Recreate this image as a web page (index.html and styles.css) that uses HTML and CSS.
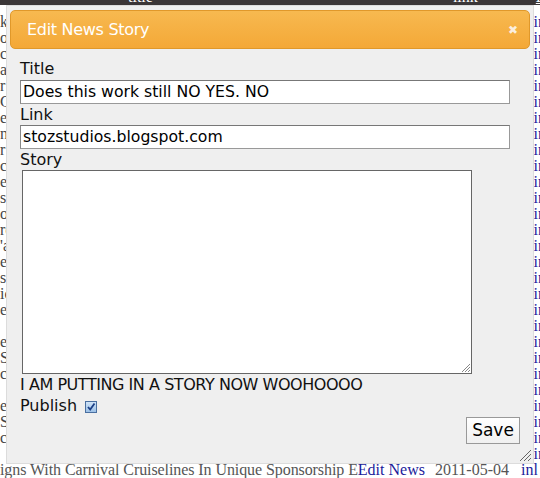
FILE: index.html
```html
<!DOCTYPE html>
<html>
<head>
<meta charset="utf-8">
<link rel="stylesheet" href="styles.css">
</head>
<body>
<div class="page">
  <div class="topbar">
    <span class="th th-title">title</span>
    <span class="th th-link">link</span>
    <span class="th th-l">L</span>
  </div>
  <div class="rows">
    <div class="row"><span class="lc">k</span><a class="rc">in</a></div>
    <div class="row"><span class="lc">o</span><a class="rc">in</a></div>
    <div class="row"><span class="lc">c</span><a class="rc">in</a></div>
    <div class="row"><span class="lc">a</span><a class="rc">in</a></div>
    <div class="row"><span class="lc">r</span><a class="rc">in</a></div>
    <div class="row"><span class="lc">C</span><a class="rc">in</a></div>
    <div class="row"><span class="lc">e</span><a class="rc">in</a></div>
    <div class="row"><span class="lc">n</span><a class="rc">in</a></div>
    <div class="row"><span class="lc">r</span><a class="rc">in</a></div>
    <div class="row"><span class="lc">cl</span><a class="rc">in</a></div>
    <div class="row"><span class="lc">e</span><a class="rc">in</a></div>
    <div class="row"><span class="lc">s</span><a class="rc">in</a></div>
    <div class="row"><span class="lc">or</span><a class="rc">in</a></div>
    <div class="row"><span class="lc">re</span><a class="rc">in</a></div>
    <div class="row"><span class="lc">'a</span><a class="rc">in</a></div>
    <div class="row"><span class="lc">e</span><a class="rc">in</a></div>
    <div class="row"><span class="lc">s</span><a class="rc">in</a></div>
    <div class="row"><span class="lc">ic</span><a class="rc">in</a></div>
    <div class="row"><span class="lc">e</span><a class="rc">in</a></div>
    <div class="row"><span class="lc">&nbsp;</span><a class="rc">in</a></div>
    <div class="row"><span class="lc">e</span><a class="rc">in</a></div>
    <div class="row"><span class="lc">S</span><a class="rc">in</a></div>
    <div class="row"><span class="lc">c</span><a class="rc">in</a></div>
    <div class="row"><span class="lc">&nbsp;</span><a class="rc">in</a></div>
    <div class="row"><span class="lc">e</span><a class="rc">in</a></div>
    <div class="row"><span class="lc">S</span><a class="rc">in</a></div>
    <div class="row"><span class="lc">c</span><a class="rc">in</a></div>
    <div class="row"><span class="lc">&nbsp;</span><a class="rc">in</a></div>
    <div class="row bottom"><span class="wide">igns With Carnival Cruiselines In Unique Sponsorship E</span><a class="edit">Edit News</a><span class="date">2011-05-04</span><a class="rc2">inl</a></div>
  </div>

  <div class="dialog">
    <div class="titlebar">
      <span class="dtitle">Edit News Story</span>
      <span class="close">&#x2716;</span>
    </div>
    <div class="content">
      <label class="lbl first">Title</label>
      <div class="input">Does this work still NO YES. NO</div>
      <label class="lbl">Link</label>
      <div class="input">stozstudios.blogspot.com</div>
      <label class="lbl">Story</label>
      <div class="textarea">
        <svg class="grip" width="10" height="10" viewBox="0 0 10 10"><path d="M2 10 L10 2 M5 10 L10 5 M8 10 L10 8" stroke="#888" stroke-width="1" fill="none"/></svg>
      </div>
      <div class="line caps">I AM PUTTING IN A STORY NOW WOOHOOOO</div>
      <div class="line publish">Publish <span class="check"><svg width="10" height="10" viewBox="0 0 10 10"><path d="M2 5 L4.2 7.5 L8.5 1.5" stroke="#1b3f86" stroke-width="1.8" fill="none"/></svg></span></div>
      <div class="actions"><span class="btn">Save</span></div>
    </div>
    <svg class="dgrip" width="12" height="12" viewBox="0 0 12 12"><path d="M1 12 L12 1 M5 12 L12 5 M9 12 L12 9" stroke="#666" stroke-width="1" fill="none"/></svg>
  </div>
</div>
</body>
</html>
```

FILE: styles.css
```css
html, body {
  margin: 0;
  padding: 0;
  background: #fff;
}
.page {
  position: relative;
  width: 540px;
  height: 478px;
  overflow: hidden;
  font-family: "Liberation Serif", serif;
}
.topbar {
  height: 5px;
  background: #3b3637;
  display: flex;
  align-items: flex-end;
  overflow: hidden;
  color: #fff;
  font-size: 16px;
}
.th {
  line-height: 16px;
  flex: none;
}
.th-title { margin-left: 128px; }
.th-link { margin-left: 300px; }
.th-l { margin-left: 58px; color: #fff; text-decoration: underline; }
.rows {
  padding-top: 9px;
}
.row {
  display: flex;
  justify-content: space-between;
  height: 16px;
  line-height: 16px;
  font-size: 16px;
  color: #444;
  white-space: nowrap;
}
.rc {
  color: #1a1a9a;
  margin-right: -6px;
}
.row.bottom {
  justify-content: flex-start;
}
.wide {
  color: #555;
  letter-spacing: -0.08px;
}
.edit { color: #1a1a9a; }
.date {
  color: #555;
  margin-left: 10px;
}
.rc2 {
  color: #1a1a9a;
  margin-left: 12px;
}

.dialog {
  position: absolute;
  left: 6px;
  top: 5px;
  width: 526px;
  height: 457px;
  background: #efefef;
  border: 1px solid #dcdcdc;
  font-family: "DejaVu Sans", sans-serif;
}
.titlebar {
  margin: 4px 3px 0 3px;
  height: 37px;
  border: 1px solid #e0982a;
  border-radius: 5px;
  background: linear-gradient(#f7b950, #f4a837);
  display: flex;
  align-items: center;
  justify-content: space-between;
  padding: 0 11px 0 16px;
}
.dtitle {
  color: #fff;
  font-size: 16px;
  letter-spacing: -0.3px;
}
.close {
  color: #fbeede;
  font-size: 12px;
  font-weight: bold;
}
.content {
  padding: 10px 0 0 13px;
  display: flex;
  flex-direction: column;
  align-items: flex-start;
  font-size: 16px;
  color: #111;
}
.lbl {
  display: block;
  line-height: 21px;
  height: 21px;
}
.lbl.first {
  line-height: 19px;
}
.input {
  box-sizing: border-box;
  width: 490px;
  height: 24px;
  border: 1px solid #999;
  border-top-color: #777;
  border-left-color: #888;
  background: #fff;
  padding: 0 2px;
  line-height: 21px;
  font-size: 15.7px;
  color: #000;
}
.textarea {
  box-sizing: border-box;
  width: 450px;
  height: 204px;
  margin-left: 2px;
  border: 1px solid #666;
  background: #fff;
  position: relative;
}
.grip {
  position: absolute;
  right: 1px;
  bottom: 1px;
}
.line {
  line-height: 20px;
  height: 20px;
  margin-top: 1px;
}
.caps {
  letter-spacing: -0.45px;
}
.publish {
  display: flex;
  align-items: center;
  gap: 8px;
  margin-top: 1px;
}
.check {
  width: 10px;
  height: 10px;
  border: 1px solid #4a6fa0;
  background: linear-gradient(#cfe3f8, #9cc0e6);
  display: inline-flex;
  align-items: center;
  justify-content: center;
  margin-top: 2px;
}
.actions {
  align-self: stretch;
  display: flex;
  justify-content: flex-end;
  padding-right: 13px;
  margin-top: 1px;
}
.btn {
  box-sizing: border-box;
  width: 54px;
  height: 27px;
  border: 1px solid #999;
  background: linear-gradient(#fff, #f0f0f0);
  font-size: 17px;
  line-height: 24px;
  text-align: center;
  color: #000;
}
.dgrip {
  position: absolute;
  right: 2px;
  bottom: 2px;
}
```
